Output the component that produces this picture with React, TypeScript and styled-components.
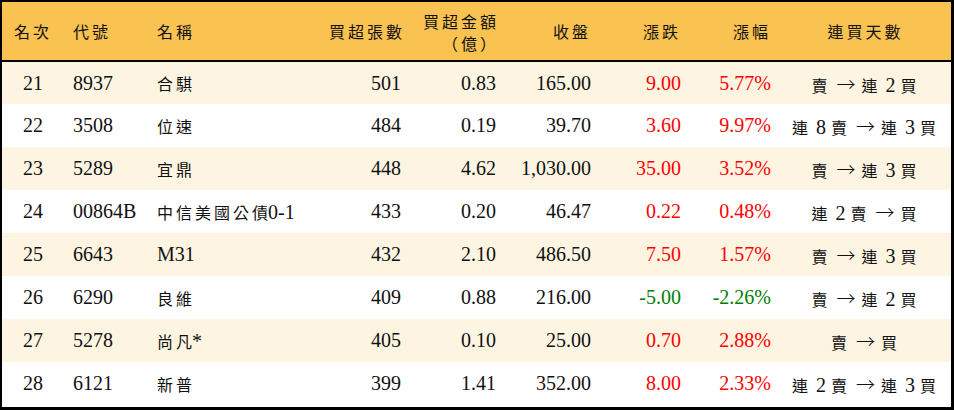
import { Fragment } from "react";
import styled, { createGlobalStyle } from "styled-components";

const GlobalStyle = createGlobalStyle`
  html, body {
    margin: 0;
    padding: 0;
    background: #ffffff;
  }
  body {
    font-family: "Liberation Serif", "Noto Sans CJK TC", serif;
  }
`;

type Align = "left" | "right" | "center";
type Tone = "up" | "down" | "flat";

type RankRow = {
  rank: number;
  code: string;
  name: string;
  lots: number;
  amount: string;
  close: string;
  change: string;
  pct: string;
  streak: string;
};

const rows: RankRow[] = [
  { rank: 21, code: "8937", name: "合騏", lots: 501, amount: "0.83", close: "165.00", change: "9.00", pct: "5.77%", streak: "賣 → 連 2 買" },
  { rank: 22, code: "3508", name: "位速", lots: 484, amount: "0.19", close: "39.70", change: "3.60", pct: "9.97%", streak: "連 8 賣 → 連 3 買" },
  { rank: 23, code: "5289", name: "宜鼎", lots: 448, amount: "4.62", close: "1,030.00", change: "35.00", pct: "3.52%", streak: "賣 → 連 3 買" },
  { rank: 24, code: "00864B", name: "中信美國公債0-1", lots: 433, amount: "0.20", close: "46.47", change: "0.22", pct: "0.48%", streak: "連 2 賣 → 買" },
  { rank: 25, code: "6643", name: "M31", lots: 432, amount: "2.10", close: "486.50", change: "7.50", pct: "1.57%", streak: "賣 → 連 3 買" },
  { rank: 26, code: "6290", name: "良維", lots: 409, amount: "0.88", close: "216.00", change: "-5.00", pct: "-2.26%", streak: "賣 → 連 2 買" },
  { rank: 27, code: "5278", name: "尚凡*", lots: 405, amount: "0.10", close: "25.00", change: "0.70", pct: "2.88%", streak: "賣 → 買" },
  { rank: 28, code: "6121", name: "新普", lots: 399, amount: "1.41", close: "352.00", change: "8.00", pct: "2.33%", streak: "連 2 賣 → 連 3 買" },
];

// widths add up to the 949px inside the frame
const columns: { width: number; align: Align }[] = [
  { width: 62, align: "center" },
  { width: 84, align: "left" },
  { width: 172, align: "left" },
  { width: 90, align: "right" },
  { width: 95, align: "right" },
  { width: 95, align: "right" },
  { width: 90, align: "right" },
  { width: 90, align: "right" },
  { width: 171, align: "center" },
];

//#region styles
const Frame = styled.div`
  width: 954px;
  height: 410px;
  box-sizing: border-box;
  border-style: solid;
  border-color: #000;
  border-width: 2px 3px 3px 2px;
  overflow: hidden;
  background: #fff;
`;

const Table = styled.table`
  width: 949px;
  border-collapse: collapse;
  table-layout: fixed;
`;

const HeadRow = styled.tr`
  height: 59px;
  background: #f9c251;
  border-bottom: 2px solid #000;
`;

const HeadCell = styled.th<{ $align: Align }>`
  padding: 0 9px;
  text-align: ${(p) => p.$align};
  font-weight: normal;
  font-family: "Noto Sans CJK TC", "Liberation Serif", sans-serif;
  font-size: 16px;
  letter-spacing: 3px;
  line-height: 22px;
  color: #111111;
  vertical-align: middle;
  white-space: nowrap;
`;

const HeadLines = styled.span`
  display: inline-block;
  text-align: right;
  margin-top: 2px;
  margin-right: -3px;
`;

const BodyRow = styled.tr<{ $striped: boolean }>`
  height: 43px;
  background: ${(p) => (p.$striped ? "#fdf5e1" : "#ffffff")};
`;

const Cell = styled.td<{ $align: Align; $tone?: Tone }>`
  padding: 0 9px;
  text-align: ${(p) => p.$align};
  font-size: 20px;
  color: ${(p) => (p.$tone === "up" ? "#ff0000" : p.$tone === "down" ? "#008000" : "#111111")};
  vertical-align: middle;
  white-space: nowrap;
  overflow: hidden;
`;

const Han = styled.span<{ $tight?: boolean }>`
  font-family: "Noto Sans CJK TC", sans-serif;
  font-size: 16px;
  letter-spacing: ${(p) => (p.$tight ? "0" : "3px")};
`;

const Arrow = styled.span`
  font-family: "Noto Sans CJK TC", sans-serif;
  font-size: 19px;
  font-weight: 300;
  margin: 0 1px;
`;
//#endregion styles

// split text so the Chinese characters get the CJK font and the digits stay in the serif
function Mixed({ text }: { text: string }) {
  const parts = text.split(/([\u3400-\u9fff]+|→)/).filter((s) => s !== "");
  return (
    <>
      {parts.map((part, i) => {
        if (part === "→") return <Arrow key={i}>→</Arrow>;
        if (/[\u3400-\u9fff]/.test(part)) {
          // no trailing gap before a glyph that follows straight on, like 尚凡*
          const tight = i < parts.length - 1 && !parts[i + 1].startsWith(" ");
          return (
            <Han key={i} $tight={tight && part.length === 1}>
              {tight && part.length > 1 ? (
                <>
                  {part.slice(0, -1)}
                  <Han $tight>{part.slice(-1)}</Han>
                </>
              ) : (
                part
              )}
            </Han>
          );
        }
        return <Fragment key={i}>{part}</Fragment>;
      })}
    </>
  );
}

const toneOf = (v: string): Tone => (v.startsWith("-") ? "down" : "up");

export default function App() {
  const heads = ["名次", "代號", "名稱", "買超張數", "", "收盤", "漲跌", "漲幅", "連買天數"];

  return (
    <>
      <GlobalStyle />
      <Frame>
        <Table>
          <colgroup>
            {columns.map((c, i) => (
              <col key={i} style={{ width: c.width }} />
            ))}
          </colgroup>
          <thead>
            <HeadRow>
              {heads.map((h, i) =>
                i === 4 ? (
                  <HeadCell key={i} $align="right">
                    <HeadLines>
                      買超金額
                      <br />
                      （億）
                    </HeadLines>
                  </HeadCell>
                ) : (
                  <HeadCell key={i} $align={columns[i].align}>
                    {h}
                  </HeadCell>
                )
              )}
            </HeadRow>
          </thead>
          <tbody>
            {rows.map((r, idx) => (
              <BodyRow key={r.rank} $striped={idx % 2 === 0}>
                <Cell $align="center">{r.rank}</Cell>
                <Cell $align="left">{r.code}</Cell>
                <Cell $align="left">
                  <Mixed text={r.name} />
                </Cell>
                <Cell $align="right">{r.lots}</Cell>
                <Cell $align="right">{r.amount}</Cell>
                <Cell $align="right">{r.close}</Cell>
                <Cell $align="right" $tone={toneOf(r.change)}>
                  {r.change}
                </Cell>
                <Cell $align="right" $tone={toneOf(r.pct)}>
                  {r.pct}
                </Cell>
                <Cell $align="center">
                  <Mixed text={r.streak} />
                </Cell>
              </BodyRow>
            ))}
          </tbody>
        </Table>
      </Frame>
    </>
  );
}
